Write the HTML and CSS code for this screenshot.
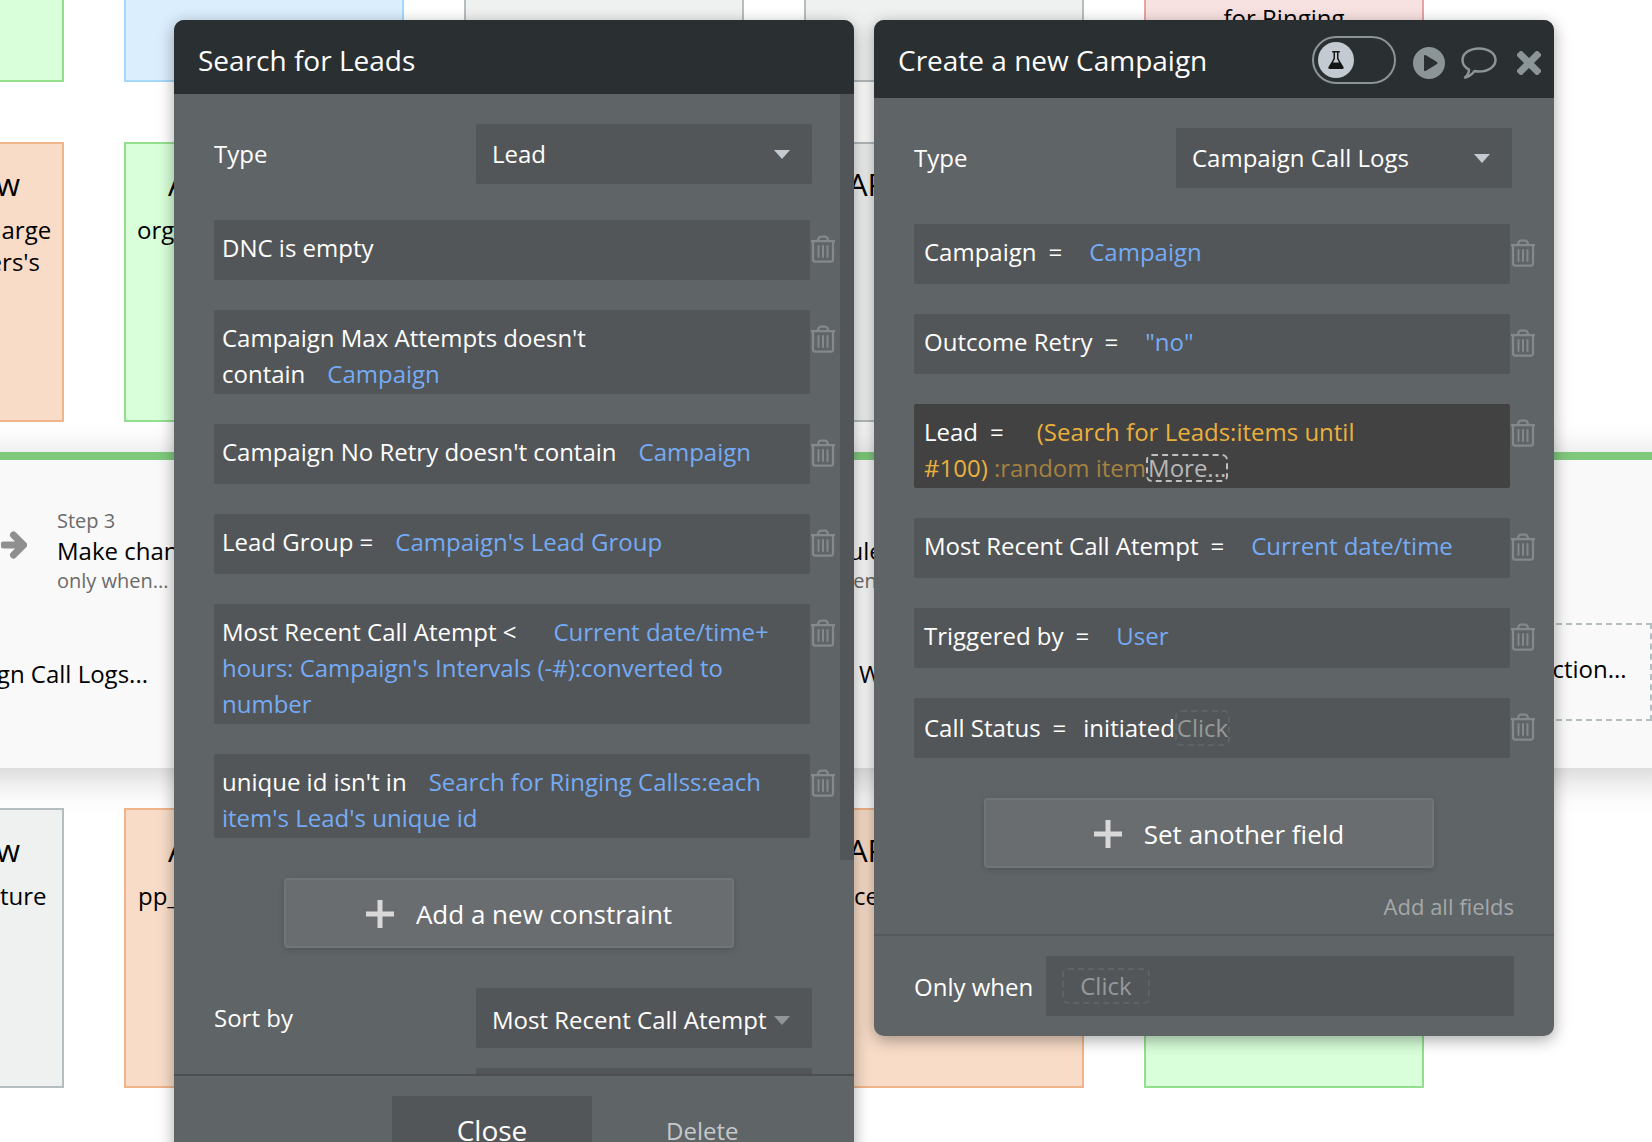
FILE: index.html
```html
<!DOCTYPE html>
<html lang="en">
	<head>
		<meta charset="UTF-8">
		<meta name="viewport" content="width=device-width, initial-scale=1.0">
		<title>Workflow</title>
		<link rel="stylesheet" href="styles.css">
	</head>
	<body>
		<!-- icons used more than once -->
		<svg class="sprite" aria-hidden="true">
			<symbol id="trash" viewBox="0 0 26 28">
				<path d="M1 6h24M7.500 6l1.500-3.500Q9.500 1.500 10.500 1.500h5Q16.500 1.500 17 2.500L18.500 6M3 6v18.500Q3 26.500 5 26.500h16Q23 26.500 23 24.500V6" fill="none" stroke="currentColor" stroke-width="2.250"/>
				<path d="M8.500 11v11M13 11v11M17.500 11v11" fill="none" stroke="currentColor" stroke-width="2" stroke-linecap="round"/>
			</symbol>
			<symbol id="plus" viewBox="0 0 28 28">
				<path d="M14 0v28M0 14h28" stroke="currentColor" stroke-width="5"/>
			</symbol>
		</svg>

		<!-- Workflow board -->
		<main class="board">
			<div class="events">
				<div class="event green"></div>
				<div class="event blue"></div>
				<div class="event grey"></div>
				<div class="event grey"></div>
				<div class="event red">
					<h3>Custom Event</h3>
					<p>Schedule<br>the call<br>on a list<br>Search<br>for Ringing</p>
				</div>
			</div>
			<div class="events">
				<div class="event orange">
					<h3>API Workflow</h3>
					<p>create_stripe_recharge<br>for each customers's</p>
				</div>
				<div class="event green">
					<h3>API Workflow</h3>
					<p>org_campaign_create_list_call</p>
				</div>
				<div class="event grey"></div>
				<div class="event grey">
					<h3>API Workflow</h3>
				</div>
			</div>

			<section class="flow">
				<div class="steps">
					<div class="step">
						<small>Step 2</small>
						<a href="#">Make changes...</a>
						<small>only when...</small>
					</div>
					<div class="step">
						<svg class="arrow" viewBox="0 0 26 28"><path d="M3 14h18M12.500 4l10 10-10 10" fill="none" stroke="currentColor" stroke-width="7" stroke-linecap="round"/></svg>
						<small>Step 3</small>
						<a href="#">Make changes to Lead...</a>
						<small>only when...</small>
					</div>
					<div class="step">
						<small>Step 4</small>
						<a href="#">Make changes...</a>
						<small>only when...</small>
					</div>
					<div class="step">
						<small>Step 5</small>
						<a href="#">Schedule API...</a>
						<small>only when...</small>
					</div>
				</div>
				<div class="actions">
					<a class="action last" href="#">Create a new Campaign Call Logs...</a>
					<a class="action" href="#">When done...</a>
					<button class="add-action" type="button">Click here to add an action...</button>
				</div>
			</section>

			<div class="events">
				<div class="event grey">
					<h3>API Workflow</h3>
					<p>charge_order_capture</p>
				</div>
				<div class="event orange">
					<h3>API Workflow</h3>
					<p>pp_campaign_create_list_call</p>
				</div>
				<div class="event orange"></div>
				<div class="event orange">
					<h3>API Workflow</h3>
					<p>cell_revalidation</p>
				</div>
				<div class="event green"></div>
			</div>
		</main>

		<!-- Search for Leads -->
		<section class="panel search">
			<header>
				<h2>Search for Leads</h2>
			</header>
			<div class="scroll">
				<div class="content">
					<div class="line">
						<label for="leadType">Type</label>
						<span class="select"><select id="leadType"><option>Lead</option></select></span>
					</div>
					<div class="row">
						<div class="field">DNC is empty</div>
						<button class="trash" type="button" aria-label="Delete"><svg><use href="#trash"/></svg></button>
					</div>
					<div class="row">
						<div class="field">Campaign Max Attempts doesn't contain<span class="value">Campaign</span></div>
						<button class="trash" type="button" aria-label="Delete"><svg><use href="#trash"/></svg></button>
					</div>
					<div class="row">
						<div class="field">Campaign No Retry doesn't contain<span class="value">Campaign</span></div>
						<button class="trash" type="button" aria-label="Delete"><svg><use href="#trash"/></svg></button>
					</div>
					<div class="row">
						<div class="field">Lead Group =<span class="value">Campaign's Lead Group</span></div>
						<button class="trash" type="button" aria-label="Delete"><svg><use href="#trash"/></svg></button>
					</div>
					<div class="row">
						<div class="field">Most Recent Call Atempt &lt;<span class="value wide">Current date/time+ hours: Campaign's Intervals (-#):converted to number</span></div>
						<button class="trash" type="button" aria-label="Delete"><svg><use href="#trash"/></svg></button>
					</div>
					<div class="row">
						<div class="field">unique id isn't in<span class="value">Search for Ringing Callss:each item's Lead's unique id</span></div>
						<button class="trash" type="button" aria-label="Delete"><svg><use href="#trash"/></svg></button>
					</div>
					<button class="add" type="button"><svg><use href="#plus"/></svg>Add a new constraint</button>
					<div class="line">
						<label for="sortBy">Sort by</label>
						<span class="select dim"><select id="sortBy"><option>Most Recent Call Atempt</option></select></span>
					</div>
					<div class="line next">
						<span class="select"><select aria-label="Descending"><option></option></select></span>
					</div>
				</div>
				<div class="scrollbar"><div class="thumb"></div></div>
			</div>
			<footer>
				<button class="close" type="button">Close</button>
				<button class="delete" type="button">Delete</button>
			</footer>
		</section>

		<!-- Create a new Campaign -->
		<section class="panel create">
			<header>
				<h2>Create a new Campaign</h2>
				<label class="toggle">
					<input type="checkbox" aria-label="Experimental">
					<svg viewBox="0 0 36 36">
						<circle cx="18" cy="18" r="18" fill="#c3cad1"/>
						<path d="M14.250 9.750h7.500M16.250 10v6.500L11.500 25.500h13L19.750 16.500V10" fill="none" stroke="#161616" stroke-width="1.500"/>
						<path d="M13.500 20.500h9l3 4.500q.500 2-1.500 2H12q-2 0-1.500-2z" fill="#161616"/>
					</svg>
				</label>
				<button class="icon" type="button" aria-label="Run">
					<svg class="play" viewBox="0 0 32 32"><path fill-rule="evenodd" d="M16 0a16 16 0 1 1 0 32a16 16 0 1 1 0-32zM11 9v14q0 1.500 1.500 1L24 17q1.200-1 0-2L12.500 8Q11 7.500 11 9z" fill="currentColor"/></svg>
				</button>
				<button class="icon" type="button" aria-label="Comment">
					<svg class="bubble" viewBox="0 0 36 32"><path d="M18 1.500c9.500 0 16.500 5 16.500 11.500S27.500 24.500 18 24.500q-2.500 0-4.500-.500Q9.500 29.500 4 30.500q4-3.500 4-8C4 20.500 1.500 17 1.500 13C1.500 6.500 8.500 1.500 18 1.500z" fill="none" stroke="currentColor" stroke-width="2.500" stroke-linejoin="round"/></svg>
				</button>
				<button class="icon" type="button" aria-label="Close">
					<svg class="cross" viewBox="0 0 24 24"><path d="M4 4l16 16M20 4L4 20" stroke="currentColor" stroke-width="7" stroke-linecap="square"/></svg>
				</button>
			</header>
			<div class="content">
				<div class="line">
					<label for="thingType">Type</label>
					<span class="select"><select id="thingType"><option>Campaign Call Logs</option></select></span>
				</div>
				<div class="row">
					<div class="field"><span class="name">Campaign</span>=<span class="value">Campaign</span></div>
					<button class="trash" type="button" aria-label="Delete"><svg><use href="#trash"/></svg></button>
				</div>
				<div class="row">
					<div class="field"><span class="name">Outcome Retry</span>=<span class="value">"no"</span></div>
					<button class="trash" type="button" aria-label="Delete"><svg><use href="#trash"/></svg></button>
				</div>
				<div class="row">
					<div class="field active"><span class="name">Lead</span>=<span class="value">(Search for Leads:items until<br>#100)</span> <span class="faded">:random item</span><span class="more">More...</span></div>
					<button class="trash" type="button" aria-label="Delete"><svg><use href="#trash"/></svg></button>
				</div>
				<div class="row">
					<div class="field"><span class="name">Most Recent Call Atempt</span>=<span class="value">Current date/time</span></div>
					<button class="trash" type="button" aria-label="Delete"><svg><use href="#trash"/></svg></button>
				</div>
				<div class="row">
					<div class="field"><span class="name">Triggered by</span>=<span class="value">User</span></div>
					<button class="trash" type="button" aria-label="Delete"><svg><use href="#trash"/></svg></button>
				</div>
				<div class="row">
					<div class="field"><span class="name">Call Status</span>=<span class="text">initiated</span><span class="click">Click</span></div>
					<button class="trash" type="button" aria-label="Delete"><svg><use href="#trash"/></svg></button>
				</div>
				<button class="add" type="button"><svg><use href="#plus"/></svg>Set another field</button>
				<a class="add-all" href="#">Add all fields</a>
			</div>
			<div class="only-when">
				<label for="onlyWhen">Only when</label>
				<button id="onlyWhen" type="button"><span class="click">Click</span></button>
			</div>
		</section>
	</body>
</html>
```

FILE: styles.css
```css
*{
	box-sizing: border-box;
}
body{
	margin: 0;
	height: 100vh;
	overflow: hidden;
	position: relative;
	background-color: #fff;
	color: #000;
	font-family: "Open Sans", "Noto Sans", sans-serif;
	font-size: 24px;
}
h2, h3, p{
	margin: 0;
	font-weight: normal;
}
a{
	color: inherit;
	text-decoration: none;
}
button, select{
	margin: 0;
	padding: 0;
	border: 0;
	background: none;
	color: inherit;
	font: inherit;
}
.sprite{
	display: none;
}

/* Board, scrolled a bit past its top left corner */
.board{
	margin-top: -198px;
}
.events{
	display: grid;
	grid-template-columns: repeat(5, 280px);
	gap: 60px;
	margin: 0 0 60px -216px;
}
.event{
	height: 280px;
	padding: 20px 9px;
	border: 2px solid;
	overflow: hidden;
	text-align: center;
	line-height: 32px;
	overflow-wrap: anywhere;
}
.event h3{
	margin-bottom: 10px;
	font-size: 31px;
	line-height: 40px;
}
.green{
	background-color: #d8ffd9;
	border-color: #93df8f;
}
.blue{
	background-color: #dbeefd;
	border-color: #a6d8f9;
}
.grey{
	background-color: #eff1f0;
	border-color: #b4bdc0;
}
.red{
	background-color: #f8e2e1;
	border-color: #e6a3a1;
}
.orange{
	background-color: #f8dcc8;
	border-color: #efb48b;
}

/* Opened workflow, runs past both sides of the window */
.flow{
	height: 316px;
	margin: -30px -40px 40px;
	padding: 47px 40px 0;
	border-top: 8px solid #7fc97d;
	background-color: #f9f9f9;
	box-shadow: 0 8px 36px rgba(0, 0, 0, 0.2);
}
.steps{
	display: flex;
	margin-left: -305px;
}
.step{
	position: relative;
	flex: 0 0 362px;
	display: flex;
	flex-direction: column;
	line-height: 32px;
}
.step small{
	color: #6b6b6b;
	font-size: 20px;
	line-height: 28px;
}
.arrow{
	position: absolute;
	left: -56px;
	top: 24px;
	width: 26px;
	height: 28px;
	color: #8f8f8f;
}
.actions{
	display: flex;
	align-items: center;
	margin: 28px 0 0 -305px;
}
.action{
	flex: 0 0 453px;
	margin-right: 711px;
	padding-top: 2px;
}
.last{
	text-align: right;
}
.action + .action{
	flex: 1;
	margin: 0;
}
.add-action{
	width: 366px;
	height: 98px;
	padding-bottom: 7px;
	border: 2px dashed #b4bdc0;
}

/* Panels */
.panel{
	position: absolute;
	top: 20px;
	width: 680px;
	border-radius: 10px;
	overflow: hidden;
	background-color: #5f6466;
	box-shadow: 0 4px 16px rgba(0, 0, 0, 0.35);
	color: #fff;
}
.search{
	left: 174px;
}
.create{
	left: 874px;
}
.panel header{
	display: flex;
	align-items: center;
	height: 74px;
	padding: 6px 13px 0 24px;
	background-color: #2a2f32;
}
.create header{
	height: 78px;
	padding-top: 2px;
}
.panel h2{
	flex: 1;
	font-size: 28px;
}
.content{
	flex: 1;
	padding: 30px 0 0 40px;
}
.scroll{
	display: flex;
	height: 980px;
	overflow: hidden;
}
.scrollbar{
	flex: 0 0 14px;
}
.thumb{
	height: 766px;
	background-color: #535658;
}
.line{
	display: flex;
	align-items: center;
	justify-content: space-between;
	width: 598px;
	margin-bottom: 36px;
}
.line label{
	padding-bottom: 2px;
}
.line.next{
	justify-content: flex-end;
	margin-top: -16px;
}
.select{
	position: relative;
	width: 336px;
}
.select select{
	appearance: none;
	display: block;
	width: 100%;
	height: 60px;
	padding: 0 16px 2px;
	border-radius: 2px;
	background-color: #535658;
}
.select::after{
	content: "";
	position: absolute;
	right: 22px;
	top: 26px;
	border: 8px solid transparent;
	border-top: 9px solid #c3cad1;
	border-bottom: 0;
}
.dim select{
	padding: 2px 16px 0;
}
.dim::after{
	top: 28px;
	border-top-color: #8f9598;
}
.row{
	display: flex;
	align-items: flex-start;
	margin-bottom: 30px;
}
.field{
	width: 596px;
	min-height: 60px;
	padding: 10px 24px 2px 8px;
	border-radius: 2px;
	background-color: #535658;
	line-height: 36px;
}
.create .field{
	padding-left: 10px;
}
.name{
	margin-right: 12px;
}
.value{
	margin-left: 22px;
	color: #75abf5;
}
.create .value{
	margin-left: 27px;
}
.search .wide{
	margin-left: 37px;
}
.text{
	margin-left: 17px;
}
.active{
	background-color: #424242;
}
.create .active .value{
	margin-left: 33px;
	color: #eab03d;
}
.faded{
	color: #a38140;
}
.more{
	display: inline-block;
	border: 2px dashed #c0c0c0;
	border-radius: 6px;
	color: #b8b8b8;
	line-height: 24px;
}
.click{
	display: inline-block;
	border: 2px dashed #606365;
	border-radius: 6px;
	color: #96999a;
	line-height: 32px;
}
.field .click{
	margin-top: 2px;
}
.trash{
	margin-top: 15px;
	color: #84898b;
}
.trash svg{
	display: block;
	width: 26px;
	height: 28px;
}
.add{
	display: flex;
	align-items: center;
	justify-content: center;
	gap: 22px;
	width: 450px;
	height: 70px;
	margin: 40px 0 40px 70px;
	padding: 2px 0 0 20px;
	border: 2px solid #707577;
	border-radius: 4px;
	background-color: #696d70;
	box-shadow: 0 2px 6px rgba(0, 0, 0, 0.15);
	font-size: 26px;
}
.add svg{
	width: 28px;
	height: 28px;
	color: #d8d8d8;
}
.search footer{
	display: flex;
	align-items: center;
	height: 112px;
	padding-left: 218px;
	border-top: 2px solid #4d4f4e;
}
.close, .delete{
	height: 70px;
	padding-bottom: 2px;
}
.close{
	width: 200px;
	background-color: #535658;
	font-size: 28px;
}
.delete{
	margin-left: 74px;
	color: #c6c8c9;
}

.toggle{
	display: flex;
	align-items: center;
	width: 84px;
	height: 48px;
	margin-right: 17px;
	padding-left: 4px;
	border: 2px solid #8b9496;
	border-radius: 24px;
}
.toggle input{
	appearance: none;
	width: 0;
	height: 0;
	margin: 0;
}
.toggle svg{
	width: 36px;
	height: 36px;
}
.icon{
	color: #8b9496;
	padding-top: 6px;
}
.icon svg{
	display: block;
	height: 32px;
}
.play{
	width: 32px;
}
.bubble{
	width: 36px;
	margin: 0 20px 0 16px;
}
.icon .cross{
	width: 24px;
	height: 24px;
	border-radius: 3px;
}
.add-all{
	display: block;
	margin: -18px 40px 12px 0;
	color: #a5a8a9;
	font-size: 22px;
	line-height: 32px;
	text-align: right;
}
.only-when{
	display: flex;
	align-items: center;
	gap: 13px;
	padding: 20px 40px;
	border-top: 2px solid #55595b;
}
.only-when button{
	flex: 1;
	height: 60px;
	padding-left: 16px;
	border-radius: 2px;
	background-color: #535658;
	text-align: left;
}
.only-when .click{
	padding: 0 16px;
}
```
